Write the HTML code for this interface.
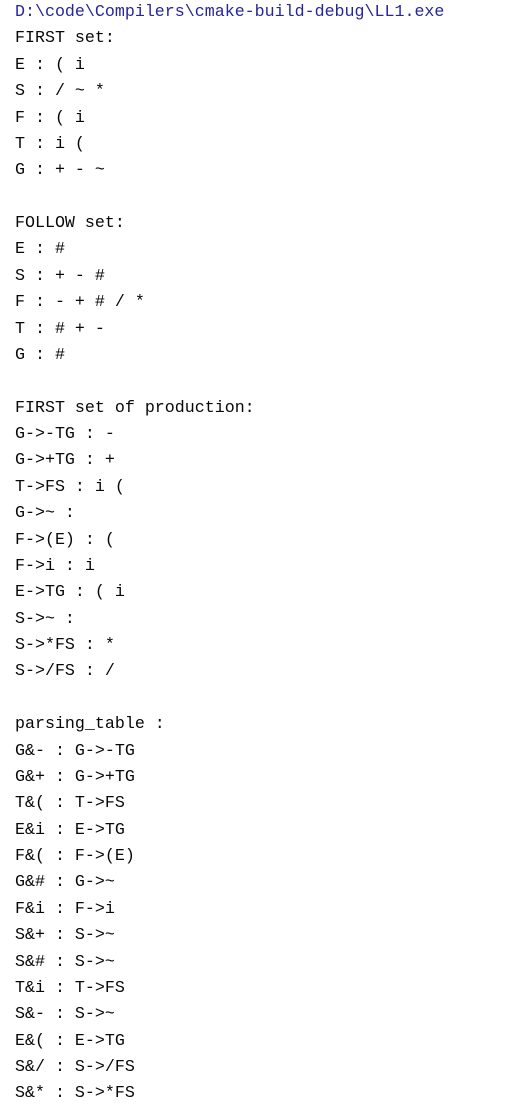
<!DOCTYPE html>
<html><head><meta charset="utf-8"><style>
html,body{margin:0;padding:0;background:#fff;width:514px;height:1103px;overflow:hidden}
pre{margin:0;position:absolute;left:15px;top:-1px;font-family:"Liberation Mono",monospace;font-size:16.65px;line-height:26.37px;color:#080808}
.b{color:#26269a}
</style></head><body><pre><span class="b">D:\code\Compilers\cmake-build-debug\LL1.exe</span>
FIRST set:
E : ( i
S : / ~ *
F : ( i
T : i (
G : + - ~

FOLLOW set:
E : #
S : + - #
F : - + # / *
T : # + -
G : #

FIRST set of production:
G->-TG : -
G->+TG : +
T->FS : i (
G->~ :
F->(E) : (
F->i : i
E->TG : ( i
S->~ :
S->*FS : *
S->/FS : /

parsing_table :
G&amp;- : G->-TG
G&amp;+ : G->+TG
T&amp;( : T->FS
E&amp;i : E->TG
F&amp;( : F->(E)
G&amp;# : G->~
F&amp;i : F->i
S&amp;+ : S->~
S&amp;# : S->~
T&amp;i : T->FS
S&amp;- : S->~
E&amp;( : E->TG
S&amp;/ : S->/FS
S&amp;* : S->*FS</pre></body></html>
